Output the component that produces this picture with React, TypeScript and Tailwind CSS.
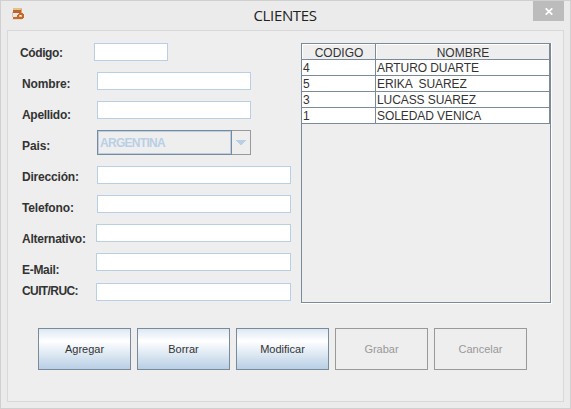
const labels = [
  { text: 'Código:', style: 'h-[31px] -ml-[2px] tracking-[-0.4px]' },
  { text: 'Nombre:', style: 'h-[31px] tracking-[-0.15px]' },
  { text: 'Apellido:', style: 'h-[31px] tracking-[-0.3px]' },
  { text: 'Pais:', style: 'h-[31px] tracking-[-0.1px]' },
  { text: 'Dirección:', style: 'h-[31px] tracking-[-0.2px]' },
  { text: 'Telefono:', style: 'h-[31px] tracking-[-0.15px]' },
  { text: 'Alternativo:', style: 'h-[31px] tracking-[-0.25px]' },
  { text: 'E-Mail:', style: 'h-[21px] tracking-[-0.3px]' },
  { text: 'CUIT/RUC:', style: 'h-[21px] tracking-[-0.6px]' },
];

const rows = [
  ['4', 'ARTURO DUARTE'],
  ['5', 'ERIKA  SUAREZ'],
  ['3', 'LUCASS SUAREZ'],
  ['1', 'SOLEDAD VENICA'],
];

const buttons = [
  { text: 'Agregar', enabled: true },
  { text: 'Borrar', enabled: true },
  { text: 'Modificar', enabled: true },
  { text: 'Grabar', enabled: false },
  { text: 'Cancelar', enabled: false },
];

function Field({ className }: { className: string }) {
  return <input className={`block h-[18px] border border-[#b8cfe5] bg-white px-1 text-xs outline-none ${className}`} />;
}

function TitleBar() {
  return (
    <header className="grid h-[29px] grid-cols-[1fr_auto_1fr] items-start">
      <svg className="ml-[11px] mt-[7px]" width="12" height="13" viewBox="0 0 12 13" shapeRendering="crispEdges">
        <path d="M1 0h9v2H1z" fill="#e3c28a" />
        <path d="M1 2h8v3H1z" fill="#b96532" />
        <path d="M9 1h1v4H9z" fill="#d9a574" />
        <path d="M0 5h7v4H0z" fill="#e9e7df" />
        <path d="M0 4h1v5H0z" fill="#c9c4b4" />
        <path d="M1 9h5v2H1z" fill="#cf6a2a" />
        <path d="M0 11h10v1H0z" fill="#dedbd0" />
        <path d="M7 5h4v1h1v4h-1v1H6V9H5V7h1V6h1z" fill="#c8672b" />
        <path d="M7 7h3v2H7z" fill="#f0c49a" />
        <path d="M8 7h1v1H8z" fill="#fff" />
      </svg>
      <h1 className="mt-[3px] w-[64px] whitespace-nowrap font-['Open_Sans',sans-serif] text-[15px] leading-[22px] tracking-[-0.35px] text-[#222]">
        CLIENTES
      </h1>
      <button className="mr-[6px] flex h-[20px] w-[31px] items-center justify-center justify-self-end bg-[#bcbcbc]">
        <svg width="8" height="7" viewBox="0 0 8 7">
          <path d="M0.7 0.3L7.3 6.7M7.3 0.3L0.7 6.7" stroke="#fff" strokeWidth="1.7" />
        </svg>
      </button>
    </header>
  );
}

function Form() {
  return (
    <div className="flex h-[260px] w-[283px] shrink-0">
      <div className="ml-[14px] w-[74px] shrink-0 text-[12px] font-bold leading-[14px] text-[#333]">
        {labels.map((l) => (
          <div key={l.text} className={`whitespace-nowrap pt-[3px] ${l.style}`}>
            {l.text}
          </div>
        ))}
      </div>
      <div className="-ml-[2px] w-[197px] shrink-0">
        <Field className="w-[74px]" />
        <Field className="ml-[3px] mt-[11px] w-[154px]" />
        <Field className="ml-[3px] mt-[11px] w-[154px]" />
        <div className="ml-[3px] mt-[11px] flex h-[25px] w-[154px]">
          <div className="w-[135px] border border-[#7a8a99]">
            <div className="h-full border border-[#b8cfe5] pl-[1px] text-[12px] font-bold leading-[22px] tracking-[-0.7px] text-[#b8cfe5]">
              ARGENTINA
            </div>
          </div>
          <div className="flex flex-1 items-center justify-center border border-l-0 border-[#999]">
            <svg width="10" height="5" viewBox="0 0 10 5" shapeRendering="crispEdges">
              <path d="M0 0h10v1H9v1H8v1H7v1H6v1H4V4H3V3H2V2H1V1H0z" fill="#b8cfe5" />
            </svg>
          </div>
        </div>
        <Field className="ml-[3px] mt-[11px] w-[194px]" />
        <Field className="ml-[3px] mt-[11px] w-[194px]" />
        <Field className="ml-[2px] mt-[11px] w-[195px]" />
        <Field className="ml-[2px] mt-[11px] w-[195px]" />
        <Field className="ml-[2px] mt-[12px] w-[195px]" />
      </div>
    </div>
  );
}

function ClientTable() {
  return (
    <div className="ml-[10px] h-[261px] w-[251px] shrink-0 border-b border-r border-white">
      <div className="h-[260px] w-[250px] border border-[#7a8a99] text-[12px] text-[#333]">
        <div className="flex h-[16px] border-b border-r border-[#7a8a99] text-center leading-[17px]">
          <div className="w-[73px] border-l border-t border-white">CODIGO</div>
          <div className="w-px bg-[#7a8a99]" />
          <div className="flex-1 border-l border-t border-white">NOMBRE</div>
        </div>
        {rows.map(([code, name]) => (
          <div key={code} className="flex h-[16px] border-b border-r border-[#7a8a99] bg-white leading-[16px]">
            <div className="w-[74px] border-r border-[#7a8a99] pl-px">{code}</div>
            <div className="whitespace-pre pl-px tracking-[-0.08px]">{name}</div>
          </div>
        ))}
      </div>
    </div>
  );
}

export default function App() {
  return (
    <div className="h-[409px] w-[571px] border border-[#d0d0d0] bg-[#ebebeb] font-['Liberation_Sans',Arial,sans-serif]">
      <TitleBar />
      <main className="ml-[6px] h-[372px] w-[557px] border border-[#d9d9d9] bg-[#eee]">
        <div className="flex pt-[12px]">
          <Form />
          <ClientTable />
        </div>
        <div className="ml-[30px] mt-[24px] flex gap-[6px]">
          {buttons.map((b) => (
            <button
              key={b.text}
              disabled={!b.enabled}
              className={`h-[42px] w-[93px] border text-[11px] ${
                b.enabled
                  ? 'border-[#7a8a99] bg-linear-to-b from-[#dde8f3] via-white via-30% to-[#b8cfe5] text-[#333]'
                  : 'border-[#999] text-[#999]'
              }`}
            >
              {b.text}
            </button>
          ))}
        </div>
      </main>
    </div>
  );
}
